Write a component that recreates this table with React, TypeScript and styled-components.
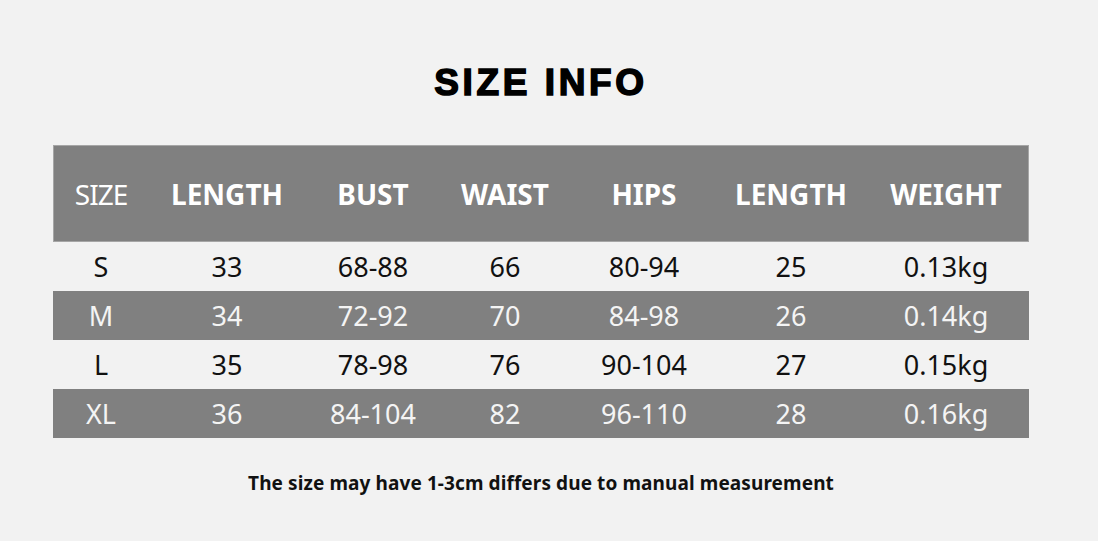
import React from 'react'
import styled, { createGlobalStyle } from 'styled-components'

const GlobalStyle = createGlobalStyle`
  html, body {
    margin: 0;
    padding: 0;
    background: #f2f2f2;
  }
`

const Page = styled.div`
  width: 1098px;
  height: 541px;
  background: #f2f2f2;
  padding: 58px 0 0 53px;
  box-sizing: border-box;
  font-family: 'Noto Sans', 'Open Sans', sans-serif;
`

const Content = styled.div`
  width: 976px;
  display: flex;
  flex-direction: column;
  align-items: center;
`

const Title = styled.h1`
  margin: 0;
  font-family: 'Liberation Sans', Arial, sans-serif;
  font-weight: 900;
  font-size: 37px;
  line-height: 50px;
  letter-spacing: 3.6px;
  color: #000;
  -webkit-text-stroke: 1.5px #000;
`

const Table = styled.div`
  width: 976px;
  margin-top: 37px;
  display: flex;
  flex-direction: column;
`

const cols = '96px 156px 136px 128px 150px 144px 166px'

const HeaderRow = styled.div`
  display: grid;
  grid-template-columns: ${cols};
  height: 97px;
  align-items: center;
  background: #808080;
  box-shadow: inset 0 0 0 1px #a6a6a6;
  color: #fff;
`

const HeadCell = styled.div<{ $light?: boolean }>`
  text-align: center;
  font-size: 28px;
  font-weight: ${p => (p.$light ? 400 : 700)};
  letter-spacing: ${p => (p.$light ? '-1px' : '0')};
`

const Row = styled.div<{ $dark: boolean }>`
  display: grid;
  grid-template-columns: ${cols};
  height: 49px;
  align-items: center;
  background: ${p => (p.$dark ? '#808080' : '#f2f2f2')};
  color: ${p => (p.$dark ? '#f4f4f4' : '#111')};
`

const Cell = styled.div`
  text-align: center;
  font-size: 27px;
  line-height: 1;
`

const Note = styled.p`
  margin: 32px 0 0;
  font-size: 19px;
  font-weight: 700;
  letter-spacing: 0.1px;
  color: #111;
`

const headers = ['SIZE', 'LENGTH', 'BUST', 'WAIST', 'HIPS', 'LENGTH', 'WEIGHT']

const rows = [
  ['S', '33', '68-88', '66', '80-94', '25', '0.13kg'],
  ['M', '34', '72-92', '70', '84-98', '26', '0.14kg'],
  ['L', '35', '78-98', '76', '90-104', '27', '0.15kg'],
  ['XL', '36', '84-104', '82', '96-110', '28', '0.16kg'],
]

export default function App() {
  return (
    <>
      <GlobalStyle />
      <Page>
        <Content>
          <Title>SIZE INFO</Title>
          <Table>
            <HeaderRow>
              {headers.map((h, i) => (
                <HeadCell key={i} $light={i === 0}>
                  {h}
                </HeadCell>
              ))}
            </HeaderRow>
            {rows.map((r, i) => (
              <Row key={r[0]} $dark={i % 2 === 1}>
                {r.map((c, j) => (
                  <Cell key={j}>{c}</Cell>
                ))}
              </Row>
            ))}
          </Table>
          <Note>The size may have 1-3cm differs due to manual measurement</Note>
        </Content>
      </Page>
    </>
  )
}
